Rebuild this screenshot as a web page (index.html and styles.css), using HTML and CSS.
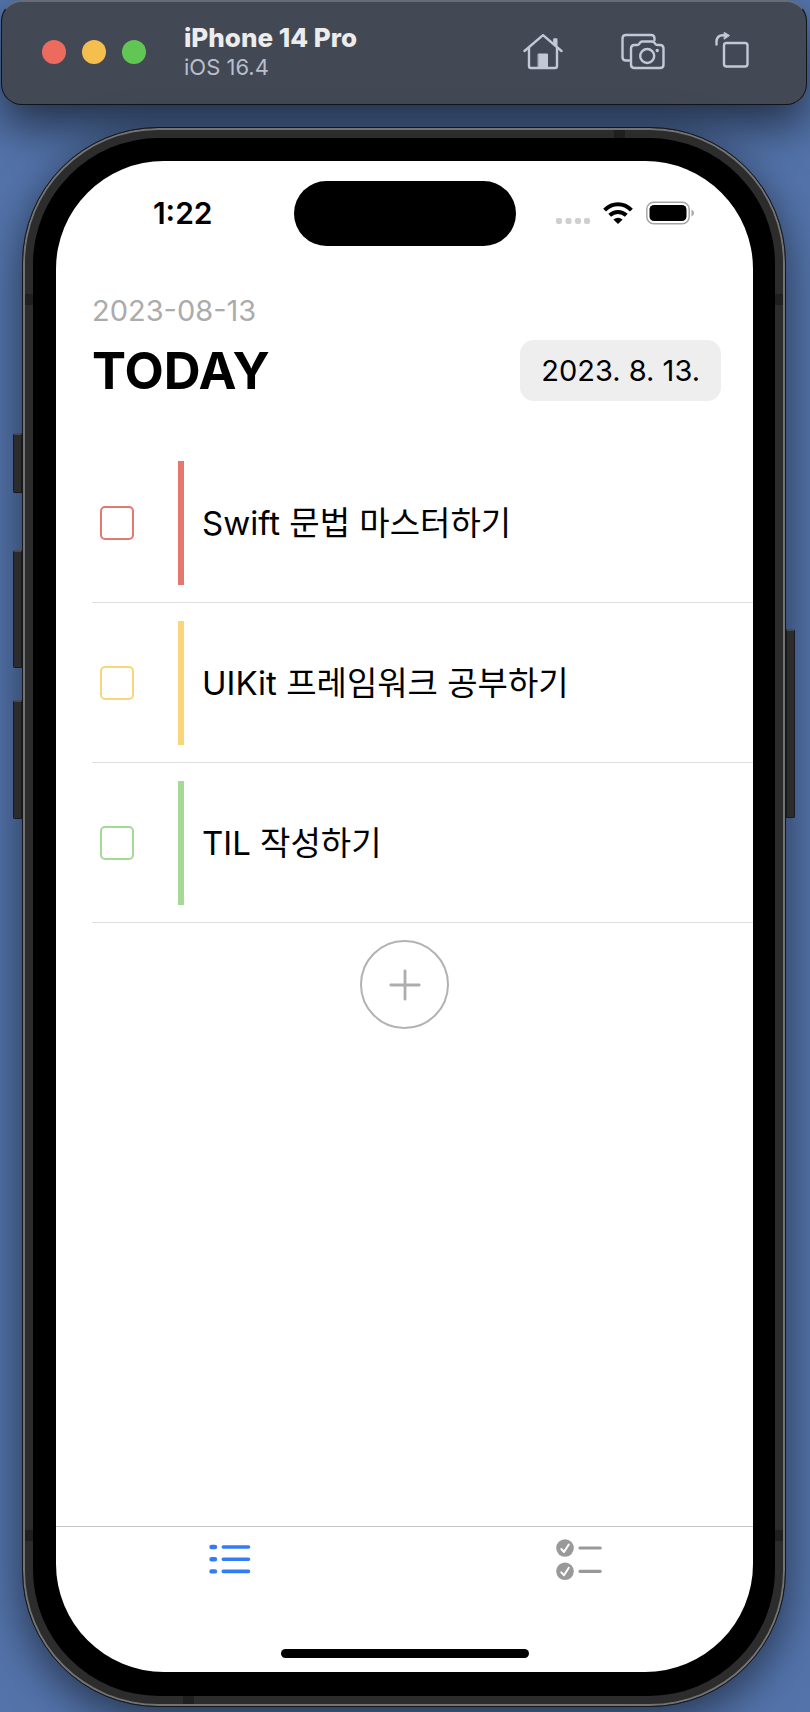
FILE: index.html
```html
<!DOCTYPE html>
<html lang="ko">
<head>
<meta charset="utf-8">
<meta name="viewport" content="width=device-width, initial-scale=1">
<title>iPhone 14 Pro</title>
<link rel="stylesheet" href="styles.css">
</head>
<body>
<header class="toolbar">
  <div class="lights">
    <button class="light light-close" aria-label="Close"></button>
    <button class="light light-minimize" aria-label="Minimize"></button>
    <button class="light light-zoom" aria-label="Zoom"></button>
  </div>
  <div class="device">
    <strong class="device-name">iPhone 14 Pro</strong>
    <span class="device-os">iOS 16.4</span>
  </div>
  <div class="tools">
    <button class="tool" aria-label="Home">
      <svg width="40" height="40" viewBox="0 0 40 40" fill="none" stroke="currentColor" stroke-width="2.400" stroke-linecap="round" stroke-linejoin="round">
        <path d="M1.500 19 L20 3.200 L38.500 19"/>
        <path d="M6 16 V34 Q6 36 8 36 H32 Q34 36 34 34 V16"/>
        <path d="M31.300 12 V7.500 H33.300 V13.500"/>
        <path d="M15.500 22 H24.500 V36 H15.500 Z" fill="currentColor" stroke-width="1"/>
      </svg>
    </button>
    <button class="tool" aria-label="Screenshot">
      <svg width="44" height="40" viewBox="0 0 44 40" fill="none" stroke="currentColor" stroke-width="2.400" stroke-linecap="round" stroke-linejoin="round">
        <path d="M8 28.500 H5 Q1.500 28.500 1.500 25 V6.500 Q1.500 3 5 3 H30 Q33.500 3 33.500 6.500 V8"/>
        <path d="M10 16.500 Q10 13 13.500 13 H16 Q17.500 13 18.300 11.800 L19.300 10.400 Q20 9.500 21.500 9.500 H31 Q32.500 9.500 33.200 10.400 L34.200 11.800 Q35 13 36.500 13 H39 Q42.500 13 42.500 16.500 V32.500 Q42.500 36 39 36 H13.500 Q10 36 10 32.500 Z"/>
        <circle cx="26.200" cy="24" r="7"/>
        <circle cx="36.200" cy="18.500" r="1.700" fill="currentColor" stroke="none"/>
      </svg>
    </button>
    <button class="tool tool-rotate" aria-label="Rotate">
      <svg width="34" height="40" viewBox="0 0 34 40" fill="none" stroke="currentColor" stroke-width="2.400" stroke-linecap="round" stroke-linejoin="round">
        <rect x="9" y="11" width="23.500" height="23.500" rx="2.500"/>
        <path d="M1.500 12.500 V10 Q1.500 3.200 8 3.200 H10"/>
        <path d="M9.500 .6 L14.500 3.500 L9.500 7 Z" fill="currentColor" stroke-width="1"/>
      </svg>
    </button>
  </div>
</header>

<div class="phone">
  <i class="key key-silent"></i>
  <i class="key key-up"></i>
  <i class="key key-down"></i>
  <i class="key key-power"></i>
  <i class="band band-side band-left band-upper"></i>
  <i class="band band-side band-right band-upper"></i>
  <i class="band band-side band-left band-lower"></i>
  <i class="band band-side band-right band-lower"></i>
  <i class="band band-top"></i>
  <i class="band band-bottom"></i>

  <div class="bezel">
  <div class="screen">
    <div class="status">
      <time class="clock">1:22</time>
      <div class="island"></div>
      <div class="signals">
        <svg width="34" height="24" viewBox="0 0 34 24" fill="#cfcfcf">
          <rect x="0" y="17" width="6" height="6" rx="2"/>
          <rect x="9.500" y="17" width="6" height="6" rx="2"/>
          <rect x="19" y="17" width="6" height="6" rx="2"/>
          <rect x="28" y="17" width="6" height="6" rx="2"/>
        </svg>
        <svg width="30" height="24" viewBox="0 0 30 24" fill="none" stroke="#000" stroke-width="4">
          <path d="M1.600 9.200 Q7.500 3.300 15 3.300 T28.400 9.200"/>
          <path d="M6.700 14.300 Q10.300 10.900 15 10.900 T23.300 14.300"/>
          <path d="M15 23 L10.400 18.400 Q15 15 19.600 18.400 Z" fill="#000" stroke="none"/>
        </svg>
        <svg width="48" height="24" viewBox="0 0 48 24">
          <rect x=".8" y="1.200" width="42.400" height="21.600" rx="7" fill="none" stroke="#a6a6a6" stroke-width="1.500"/>
          <rect x="3.500" y="4" width="37" height="16" rx="4.500"/>
          <path d="M45.500 8.500 Q48 9.500 48 12 T45.500 15.500 Z" fill="#a6a6a6"/>
        </svg>
      </div>
    </div>

    <header class="heading">
      <div>
        <p class="heading-date">2023-08-13</p>
        <h1 class="heading-title">TODAY</h1>
      </div>
      <button class="date-button">2023. 8. 13.</button>
    </header>

    <main class="content">
      <ul class="tasks">
        <li class="task task-red">
          <input class="task-check" type="checkbox" id="task-1">
          <label class="task-label" for="task-1">Swift 문법 마스터하기</label>
        </li>
        <li class="task task-yellow">
          <input class="task-check" type="checkbox" id="task-2">
          <label class="task-label" for="task-2">UIKit 프레임워크 공부하기</label>
        </li>
        <li class="task task-green">
          <input class="task-check" type="checkbox" id="task-3">
          <label class="task-label" for="task-3">TIL 작성하기</label>
        </li>
      </ul>
      <button class="add" aria-label="Add task">
        <svg width="32" height="32" viewBox="0 0 32 32" fill="none" stroke="currentColor" stroke-width="2.800" stroke-linecap="round">
          <path d="M16 1.800 V30.200 M1.800 16 H30.200"/>
        </svg>
      </button>
    </main>

    <nav class="tabs">
      <button class="tab tab-active" aria-label="Tasks">
        <svg width="42" height="42" viewBox="0 0 42 42" fill="none" stroke="currentColor" stroke-width="3.600" stroke-linecap="round">
          <path d="M2.500 8 H6 M2.500 20.200 H6 M2.500 32.400 H6" stroke-width="4.400"/>
          <path d="M14.300 8 H39.500 M14.300 20.200 H39.500 M14.300 32.400 H39.500"/>
        </svg>
      </button>
      <button class="tab" aria-label="Completed">
        <svg width="46" height="42" viewBox="0 0 46 42" fill="none" stroke-linecap="round" stroke-linejoin="round">
          <g fill="currentColor"><circle cx="9" cy="9" r="8.800"/><circle cx="9" cy="32.300" r="8.800"/></g>
          <path d="M24 9 H44.200 M24 32.300 H44.200" stroke="currentColor" stroke-width="3.200"/>
          <path d="M5.300 10 L8 13 L12.800 5.500 M5.300 33.300 L8 36.300 L12.800 28.800" stroke="#fff" stroke-width="2"/>
        </svg>
      </button>
    </nav>
    <div class="home-bar"></div>
  </div>
  </div>
</div>
</body>
</html>
```
FILE: styles.css
```css
* {
  box-sizing: border-box;
}

body {
  margin: 0;
  min-height: 100vh;
  display: flex;
  flex-direction: column;
  padding: 0 3px 5px 1px;
  background: #5373aa;
  color: #000;
  font-family: Inter, "Noto Sans CJK KR", sans-serif;
  overflow-x: hidden;
}

button {
  margin: 0;
  padding: 0;
  border: 0;
  background: none;
  color: inherit;
  font: inherit;
}

svg {
  display: block;
}

/* Simulator window bar */
.toolbar {
  display: flex;
  align-items: center;
  height: 105px;
  padding: 0 57px 2px 40px;
  border: 1px solid #111418;
  border-top: 2px solid #666d78;
  border-radius: 21px;
  background: #434954;
  box-shadow: 0 22px 44px rgba(0, 0, 0, 0.55);
}

.lights {
  display: flex;
  gap: 16px;
}

.light {
  width: 24px;
  height: 24px;
  border-radius: 50%;
}

.light-close { background: #ed6a5f; }
.light-minimize { background: #f5bf4f; }
.light-zoom { background: #62c655; }

.device {
  display: flex;
  flex-direction: column;
  margin-left: 38px;
}

.device-name {
  color: #ececec;
  font-size: 26px;
  font-weight: 800;
  line-height: 30px;
}

.device-os {
  color: #b7bfce;
  font-size: 22px;
  line-height: 28px;
}

.tools {
  display: flex;
  gap: 44px;
  margin-left: auto;
  color: #c2c8d6;
}

.tool {
  display: flex;
  justify-content: center;
  width: 56px;
}

.tool-rotate {
  width: 34px;
}

/* Device body */
.phone {
  position: relative;
  flex: 1;
  display: flex;
  margin: 22px 21px 0;
  padding: 10px;
  border: 1px solid #15171b;
  border-radius: 136px;
  background: #2c2c2c;
  box-shadow: inset 0 0 0 2px #737373, 0 12px 44px rgba(0, 0, 0, 0.55);
}

.bezel {
  flex: 1;
  display: flex;
  padding: 23px 22px 24px 23px;
  border-radius: 126px;
  background: #000;
}

.screen {
  flex: 1;
  display: flex;
  flex-direction: column;
  border-radius: 108px;
  background: #fff;
  overflow: hidden;
}

.key {
  position: absolute;
  left: -10px;
  width: 9px;
  border: 1px solid #17191c;
  border-top: 2px solid #4a4a4a;
  border-radius: 2px 0 0 2px;
  background: #2c2c2c;
}

.key-silent { top: 305px; height: 60px; }
.key-up { top: 422px; height: 118px; }
.key-down { top: 572px; height: 119px; }

.key-power {
  top: 501px;
  right: -10px;
  left: auto;
  height: 189px;
  border-radius: 0 2px 2px 0;
}

.band {
  position: absolute;
  background: #1f1f1f;
}

.band-side { width: 8px; height: 11px; }
.band-left { left: 2px; }
.band-right { right: 2px; }
.band-upper { top: 166px; }
.band-lower { bottom: 165px; }

.band-top,
.band-bottom {
  width: 11px;
  height: 8px;
}

.band-top { top: 2px; right: 160px; }
.band-bottom { bottom: 2px; left: 160px; }

/* Status bar */
.status {
  display: grid;
  grid-template-columns: 1fr 222px 1fr;
  align-items: center;
  padding-top: 20px;
}

.clock {
  padding: 0 0 2px 16px;
  font-size: 30px;
  font-weight: 600;
  text-align: center;
}

.island {
  height: 65px;
  border-radius: 33px;
  background: #000;
}

.signals {
  display: flex;
  justify-content: center;
  gap: 13px;
  padding: 0 18px 2px 0;
}

/* Heading */
.heading {
  display: flex;
  align-items: flex-end;
  justify-content: space-between;
  padding: 47px 32px 30px 36px;
}

.heading-date {
  margin: 0;
  color: #ababab;
  font-size: 29px;
  line-height: 36px;
}

.heading-title {
  margin: 0;
  font-size: 51px;
  font-weight: 700;
  line-height: 84px;
}

.date-button {
  height: 61px;
  margin-bottom: 12px;
  padding: 0 21px;
  border-radius: 14px;
  background: #eee;
  font-size: 29px;
}

/* Tasks */
.content {
  flex: 1;
  display: flex;
  flex-direction: column;
  align-items: center;
}

.tasks {
  align-self: stretch;
  margin: 0 0 17px;
  padding: 0 0 0 36px;
  list-style: none;
}

.task {
  display: flex;
  align-items: center;
  gap: 44px;
  height: 160px;
  padding: 18px 0 17px 8px;
  border-bottom: 1px solid #dedede;
}

.task-red { --accent: #e4786e; }
.task-yellow { --accent: #fad67b; }
.task-green { --accent: #a6d996; }

.task-check {
  appearance: none;
  width: 34px;
  height: 34px;
  margin: 0;
  border: 2px solid var(--accent);
  border-radius: 5px;
}

.task-label {
  flex: 1;
  display: flex;
  align-items: center;
  align-self: stretch;
  padding: 0 0 4px 18px;
  border-left: 6px solid var(--accent);
  font-size: 33px;
}

.add {
  display: grid;
  place-items: center;
  width: 89px;
  height: 89px;
  border: 2px solid #b2b2b2;
  border-radius: 50%;
  color: #adadad;
}

/* Tab bar */
.tabs {
  display: grid;
  grid-template-columns: 1fr 1fr;
  border-top: 1px solid #c4c4c4;
}

.tab {
  display: grid;
  place-items: center;
  padding: 12px 0 68px;
  color: #999;
}

.tab-active {
  color: #347cf7;
}

.home-bar {
  align-self: center;
  width: 248px;
  height: 9px;
  margin-bottom: 14px;
  border-radius: 5px;
  background: #000;
}
```
